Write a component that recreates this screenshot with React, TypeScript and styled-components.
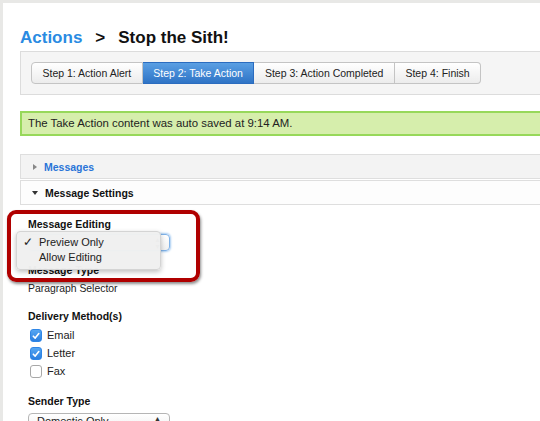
import React from "react";
import styled, { createGlobalStyle } from "styled-components";

const GlobalStyle = createGlobalStyle`
  html, body { margin: 0; padding: 0; }
  body {
    background: #e8e8e6;
    overflow: hidden;
    font-family: "Liberation Sans", Arial, Helvetica, sans-serif;
    color: #222;
  }
`;

const Page = styled.div`
  margin: 3px 0 0 3px;
  width: 760px;
  height: 430px;
  background: #fff;
  padding: 24px 0 0 17px;
  box-sizing: border-box;
  position: relative;
`;

const Title = styled.h1`
  margin: 0;
  height: 21px;
  font-size: 17px;
  line-height: 21px;
  font-weight: bold;
  color: #111;
  display: flex;
  gap: 13px;
`;

const Crumb = styled.span`
  color: #2a8be2;
`;

const StepBar = styled.div`
  margin-top: 3px;
  height: 44px;
  box-sizing: border-box;
  background: #f5f5f5;
  border: 1px solid #dcdcdc;
  padding: 10px;
  display: flex;
`;

const Tab = styled.div<{ $active?: boolean; $first?: boolean; $last?: boolean }>`
  height: 22px;
  box-sizing: border-box;
  padding: 0 10.5px;
  font-size: 10.5px;
  line-height: 20px;
  border: 1px solid ${(p) => (p.$active ? "#2b6cbf" : "#c4c4c4")};
  border-left-width: ${(p) => (p.$first ? "1px" : "0")};
  border-radius: ${(p) => (p.$first ? "4px 0 0 4px" : p.$last ? "0 4px 4px 0" : "0")};
  background: ${(p) =>
    p.$active
      ? "linear-gradient(#5a9fe3, #2f74c6)"
      : "linear-gradient(#ffffff, #ececec)"};
  color: ${(p) => (p.$active ? "#fff" : "#222")};
  white-space: nowrap;
`;

const Alert = styled.div`
  margin-top: 16px;
  height: 25px;
  box-sizing: border-box;
  background: #d6eeac;
  border: 2px solid #97d85a;
  border-right: none;
  padding-left: 6px;
  font-size: 11.4px;
  line-height: 21px;
  color: #222;
`;

const Section = styled.div<{ $open?: boolean; $gap: number }>`
  margin-top: ${(p) => p.$gap}px;
  height: 25px;
  box-sizing: border-box;
  border: 1px solid #dedede;
  border-right: none;
  background: ${(p) => (p.$open ? "#fdfdfd" : "#f3f3f3")};
  display: flex;
  align-items: center;
  padding-left: 12px;
  gap: 7px;
  font-size: 10.5px;
  font-weight: bold;
  color: ${(p) => (p.$open ? "#111" : "#2a75d8")};
`;

const Caret = styled.span<{ $open?: boolean }>`
  width: 0;
  height: 0;
  border-style: solid;
  ${(p) =>
    p.$open
      ? "border-width: 4px 3.5px 0 3.5px; border-color: #333 transparent transparent transparent; margin-left: -1px;"
      : "border-width: 3.5px 0 3.5px 4px; border-color: transparent transparent transparent #888;"}
`;

const Form = styled.div`
  padding: 12px 0 0 8px;
  display: flex;
  flex-direction: column;
`;

const Label = styled.div<{ $gap?: number }>`
  margin-top: ${(p) => p.$gap ?? 0}px;
  font-size: 10.5px;
  font-weight: bold;
  line-height: 14px;
  color: #111;
`;

const Value = styled.div`
  font-size: 10.4px;
  line-height: 14px;
  color: #222;
  margin-top: 5px;
`;

const Select = styled.div<{ $focus?: boolean }>`
  margin-top: ${(p) => (p.$focus ? "3px" : "5px")};
  width: 142px;
  height: 17px;
  box-sizing: border-box;
  border: 1px solid ${(p) => (p.$focus ? "#7fb2e8" : "#b5b5b5")};
  border-radius: 4px;
  background: linear-gradient(#fff, #f0f0f0);
  box-shadow: ${(p) => (p.$focus ? "0 0 2px 1px #a9cdf2" : "none")};
  font-size: 11px;
  line-height: 15px;
  padding: 0 8px;
  display: flex;
  justify-content: space-between;
  color: #222;
`;

const Arrows = styled.span`
  font-size: 7px;
  line-height: 7px;
  display: flex;
  flex-direction: column;
  justify-content: center;
  color: #333;
`;

const Checks = styled.div`
  margin-top: 6px;
  display: flex;
  flex-direction: column;
  gap: 5px;
`;

const CheckRow = styled.label`
  display: flex;
  align-items: center;
  gap: 5px;
  padding-left: 2px;
  font-size: 11px;
  line-height: 13px;
  color: #222;
`;

const Box = styled.span<{ $on?: boolean }>`
  width: 12px;
  height: 13px;
  box-sizing: border-box;
  border-radius: 3px;
  border: 1px solid ${(p) => (p.$on ? "#2f86e6" : "#a8a8a8")};
  background: ${(p) => (p.$on ? "linear-gradient(#55a6f2, #2a7fe0)" : "#fff")};
  display: flex;
  align-items: center;
  justify-content: center;
`;

const Popup = styled.div`
  position: absolute;
  left: 13px;
  top: 228px;
  width: 145px;
  height: 39px;
  box-sizing: border-box;
  background: rgba(240, 240, 240, 0.98);
  border: 1px solid #d4d4d4;
  border-radius: 4px;
  box-shadow: 0 2px 5px rgba(0, 0, 0, 0.25);
  padding: 3px 0 0 6px;
  font-size: 11px;
  line-height: 15px;
  color: #222;
`;

const Option = styled.div`
  display: flex;
  align-items: center;
`;

const Tick = styled.span`
  width: 16px;
  font-size: 12px;
`;

const Highlight = styled.div`
  position: absolute;
  left: 4px;
  top: 207px;
  width: 193px;
  height: 72px;
  box-sizing: border-box;
  border: 4px solid #b00000;
  border-radius: 9px;
  box-shadow: 1px 2px 3px rgba(0, 0, 0, 0.45);
`;

const CheckMark = () => (
  <svg width="8" height="8" viewBox="0 0 8 8">
    <path d="M1.3 4.2 L3.2 6.1 L6.8 1.6" fill="none" stroke="#fff" strokeWidth="1.6" strokeLinecap="round" strokeLinejoin="round" />
  </svg>
);

export default function App() {
  return (
    <>
      <GlobalStyle />
      <Page>
        <Title>
          <Crumb>Actions</Crumb>
          <span>&gt;</span>
          <span>Stop the Sith!</span>
        </Title>
        <StepBar>
          <Tab $first>Step 1: Action Alert</Tab>
          <Tab $active>Step 2: Take Action</Tab>
          <Tab>Step 3: Action Completed</Tab>
          <Tab $last>Step 4: Finish</Tab>
        </StepBar>
        <Alert>The Take Action content was auto saved at 9:14 AM.</Alert>
        <Section $gap={18}>
          <Caret />
          Messages
        </Section>
        <Section $gap={1} $open>
          <Caret $open />
          Message Settings
        </Section>
        <Form>
          <Label>Message Editing</Label>
          <Select $focus>
            <span>Preview Only</span>
            <Arrows>
              <span>▲</span>
              <span>▼</span>
            </Arrows>
          </Select>
          <Label $gap={12}>Message Type</Label>
          <Value>Paragraph Selector</Value>
          <Label $gap={13}>Delivery Method(s)</Label>
          <Checks>
            <CheckRow>
              <Box $on>
                <CheckMark />
              </Box>
              Email
            </CheckRow>
            <CheckRow>
              <Box $on>
                <CheckMark />
              </Box>
              Letter
            </CheckRow>
            <CheckRow>
              <Box />
              Fax
            </CheckRow>
          </Checks>
          <Label $gap={16}>Sender Type</Label>
          <Select>
            <span>Domestic Only</span>
            <Arrows>
              <span>▲</span>
              <span>▼</span>
            </Arrows>
          </Select>
        </Form>
        <Popup>
          <Option>
            <Tick>✓</Tick>Preview Only
          </Option>
          <Option>
            <Tick />
            Allow Editing
          </Option>
        </Popup>
        <Highlight />
      </Page>
    </>
  );
}
